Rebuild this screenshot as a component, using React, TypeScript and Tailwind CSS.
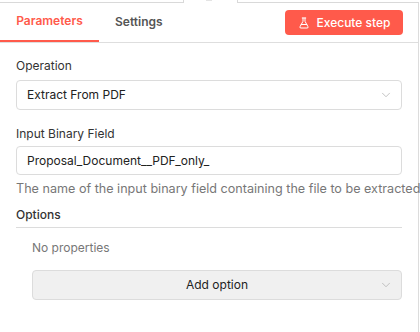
import { ChevronDown, FlaskConical } from 'lucide-react';

export default function App() {
  return (
    <div className="relative h-[332px] w-[420px] overflow-hidden bg-white font-['Inter',sans-serif] text-[#333]">
      {/* bits of the surrounding canvas peeking in at the top */}
      <div className="absolute left-0 top-0 h-[3px] w-[184px] border-b border-r border-[#d9d9d9] bg-white" />
      <div className="absolute left-[206px] top-0 h-[1px] w-[6px] bg-[#e4e4e4]" />
      <div className="absolute left-[237px] top-0 h-[3px] w-[182px] border-b border-l border-[#d9d9d9] bg-white" />

      <div className="flex h-full w-[419px] flex-col border-r border-[#dcdcdc]">
        <div className="flex h-[43px] items-end border-b border-[#dedede] pr-[15px]">
          <div className="flex h-full flex-1 items-end">
            <div className="flex h-full w-[99px] items-center justify-center border-b-2 border-[#ff5a4b] pt-[2px] text-[12px] font-semibold text-[#ff5a4b]">
              Parameters
            </div>
            <div className="flex h-full items-center pl-[16px] pt-[2px] text-[12px] font-semibold text-[#555]">
              Settings
            </div>
          </div>
          <button className="mb-[7px] flex h-[25px] w-[118px] items-center justify-center gap-[7px] rounded-[4px] bg-[#ff5a4b] text-[12px] font-medium text-white">
            <FlaskConical size={12} strokeWidth={2} />
            Execute step
          </button>
        </div>

        <div className="flex flex-col px-[16px]">
          <div className="mt-[14px] text-[12px] leading-[18px] text-[#333]">Operation</div>
          <div className="mt-[5px] flex h-[30px] items-center justify-between rounded-[4px] border border-[#dcdcdc] pl-[10px] pr-[8px] text-[12px] text-[#222]">
            <span>Extract From PDF</span>
            <ChevronDown size={14} strokeWidth={1.2} className="text-[#aaa]" />
          </div>

          <div className="mt-[15px] text-[12px] leading-[18px] text-[#333]">Input Binary Field</div>
          <div className="mt-[3px] flex h-[29px] items-center rounded-[4px] border border-[#dcdcdc] pl-[10px] text-[12px] text-[#222]">
            Proposal_Document__PDF_only_
          </div>
          <div className="mt-[5px] whitespace-nowrap text-[12.6px] leading-[18px] text-[#777]">
            The name of the input binary field containing the file to be extracted
          </div>

          <div className="mt-[8px] border-b border-[#dcdcdc] pb-[3px] text-[12px] leading-[18px] font-medium text-[#333]">
            Options
          </div>

          <div className="pl-[16px]">
            <div className="mt-[12px] text-[12px] leading-[16px] text-[#777]">No properties</div>
            <div className="relative mt-[14px] flex h-[30px] items-center justify-center rounded-[4px] border border-[#dcdcdc] bg-[#f0f0f0] text-[12px] text-[#222]">
              Add option
              <ChevronDown size={14} strokeWidth={1.2} className="absolute right-[8px] text-[#aaa]" />
            </div>
          </div>
        </div>
      </div>
    </div>
  );
}
